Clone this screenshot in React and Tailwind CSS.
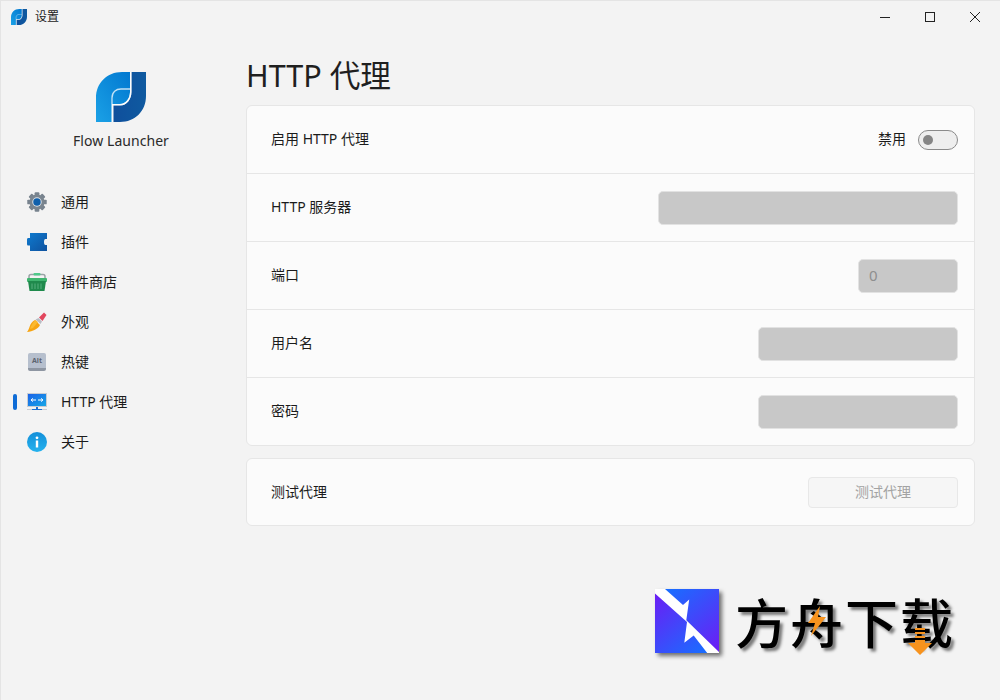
import React from "react";

const font = { fontFamily: '"Noto Sans", "Noto Sans CJK SC", sans-serif' };

function Leaf({ size, id }) {
  return (
    <svg width={size} height={size} viewBox="0 0 50 50">
      <defs>
        <linearGradient id={id + "a"} x1="0" y1="1" x2="1" y2="0">
          <stop offset="0" stopColor="#1ba1e6" />
          <stop offset="1" stopColor="#0178d0" />
        </linearGradient>
        <linearGradient id={id + "b"} x1="0" y1="0" x2="1" y2="0">
          <stop offset="0" stopColor="#0f4f9c" />
          <stop offset="1" stopColor="#0f5aa0" />
        </linearGradient>
      </defs>
      <path d="M0 50V26C0 11 11 0 26 0H34V20C34 26 30 32 24 32H16V50Z" fill={`url(#${id}a)`} />
      <path d="M17.5 50V33.5H24C31 33.5 35.5 27 35.5 20V0H50V24C50 39 39 50 24 50Z" fill={`url(#${id}b)`} />
      <path d="M16 50V26C16 20 20 17 25 17H34" fill="none" stroke="#fff" strokeOpacity=".75" strokeWidth="1.3" />
      <path d="M34.7 0V20C34.7 27 30 32.7 24 32.7H16" fill="none" stroke="#fff" strokeOpacity=".8" strokeWidth="1.3" />
    </svg>
  );
}

const GearIcon = () => (
  <svg width="22" height="22" viewBox="0 0 22 22">
    {[0, 45, 90, 135, 180, 225, 270, 315].map((a) => (
      <rect key={a} x="8.400" y="0.300" width="5.200" height="5" rx="1" fill="#78838e" transform={`rotate(${a} 11 11)`} />
    ))}
    <circle cx="11" cy="11" r="8.300" fill="#7a858f" />
    <circle cx="11" cy="11" r="5.200" fill="#dfe3e8" />
    <circle cx="11" cy="11" r="4.100" fill="#1060ab" />
  </svg>
);

const PuzzleIcon = () => (
  <svg width="20" height="18" viewBox="0 0 20 18">
    <defs>
      <linearGradient id="pz" x1="0" y1="0" x2="1" y2="1">
        <stop offset="0" stopColor="#0e7bd0" />
        <stop offset="1" stopColor="#0f529f" />
      </linearGradient>
    </defs>
    <path d="M3 0H20V6H18.500Q17 6 17 9Q17 12 18.500 12H20V18H3V12.500H1Q0 12.500 0 11V6.500Q0 5 1 5H3Z" fill="url(#pz)" />
  </svg>
);

const BasketIcon = () => (
  <svg width="20" height="18" viewBox="0 0 20 18">
    <path d="M2 6V3.500Q2 1.500 4 1.500H16Q18 1.500 18 3.500V6" fill="none" stroke="#9aa3a6" strokeWidth="1.500" />
    <rect x="6.500" y="0" width="7" height="2.500" rx="1" fill="#4fc98a" />
    <rect x="0" y="5" width="20" height="4" rx="1" fill="#3fb56f" />
    <path d="M1 8H19L17.500 18H2.500Z" fill="#1f8a4c" />
    <path d="M5 10.500V16M8 10.500V16M11 10.500V16M14 10.500V16" stroke="#58b07f" strokeWidth="1" />
  </svg>
);

const BrushIcon = () => (
  <svg width="20" height="20" viewBox="0 0 20 20">
    <path d="M8 8L13 13C11 17 6 19.500 0 20C3 17 2 11 8 8Z" fill="#f7a411" />
    <path d="M8.500 8L11 10L6 16L3 17C4 14 6 10 8.500 8Z" fill="#fbb92e" />
    <path d="M8.500 7.500L13.500 12L15 9.500L11.500 6Z" fill="#b9bcc4" />
    <path d="M12 5.500L15.500 9L19.500 3L17 .5Z" fill="#e2465d" />
  </svg>
);

const AltIcon = () => (
  <div className="w-[18px] h-[18px] rounded-[2px] bg-[#b6bfcd] border-b-[3px] border-[#8e96a2] flex items-center justify-center">
    <span className="text-[7px] leading-none font-bold text-[#5d6470]" style={font}>Alt</span>
  </div>
);

const MonitorIcon = () => (
  <svg width="20" height="18" viewBox="0 0 20 18">
    <defs>
      <linearGradient id="mn" x1="0" y1="0" x2="1" y2="1">
        <stop offset="0" stopColor="#1b62e8" />
        <stop offset="1" stopColor="#16a6e6" />
      </linearGradient>
    </defs>
    <rect x="0" y="0" width="20" height="14" fill="#c7ccd3" />
    <rect x="1" y="1" width="18" height="12" fill="url(#mn)" />
    <path d="M4 7H9M11 7H16" stroke="#fff" strokeWidth="1" />
    <path d="M6 5.300L4 7L6 8.700M14 5.300L16 7L14 8.700" fill="none" stroke="#fff" strokeWidth=".9" />
    <rect x="9" y="14" width="2" height="2" fill="#1d6fd2" />
    <rect x="0" y="16" width="20" height="1" fill="#c7ccd3" />
    <rect x="5" y="16" width="10" height="1" fill="#1d6fd2" />
  </svg>
);

const InfoIcon = () => (
  <svg width="20" height="20" viewBox="0 0 20 20">
    <defs>
      <linearGradient id="inf" x1="0" y1="0" x2="0" y2="1">
        <stop offset="0" stopColor="#138fd9" />
        <stop offset="1" stopColor="#25b2ee" />
      </linearGradient>
    </defs>
    <circle cx="10" cy="10" r="10" fill="url(#inf)" />
    <circle cx="10" cy="5.800" r="1.400" fill="#fff" />
    <rect x="8.800" y="8.500" width="2.400" height="7" fill="#fff" />
  </svg>
);

const navItems = [
  { label: "通用", icon: <GearIcon /> },
  { label: "插件", icon: <PuzzleIcon /> },
  { label: "插件商店", icon: <BasketIcon /> },
  { label: "外观", icon: <BrushIcon /> },
  { label: "热键", icon: <AltIcon /> },
  { label: "HTTP 代理", icon: <MonitorIcon />, active: true },
  { label: "关于", icon: <InfoIcon /> },
];

function Field({ width, value }) {
  return (
    <div className={`${width} h-[34px] rounded-[5px] bg-[#c8c8c8] border border-[#e2e2e2] flex items-center px-[10px] text-[15px] text-[#8f8f8f]`}>
      {value}
    </div>
  );
}

function Row({ label, children, height }) {
  return (
    <div className={`${height} flex items-center justify-between pl-6 pr-4`}>
      <span className="text-[14px] pb-[2px] text-[#1b1b1b]">{label}</span>
      {children}
    </div>
  );
}

const divided = "h-[68px] border-b border-[#e6e6e6]";

export default function App() {
  return (
    <div className="relative w-[1000px] h-[700px] overflow-hidden bg-[#f3f3f3] border-l border-t border-[#e4e4e4] flex flex-col" style={font}>
      {/* Title bar */}
      <div className="h-[32px] flex items-center pl-[10px] shrink-0">
        <Leaf size={16} id="t" />
        <span className="ml-[8px] text-[12px] text-[#222]">设置</span>
        <div className="ml-auto flex items-center pr-[3px]">
          <div className="w-[45px] h-[32px] flex items-center justify-center">
            <div className="w-[10px] h-px bg-[#222]" />
          </div>
          <div className="w-[45px] h-[32px] flex items-center justify-center">
            <div className="w-[10px] h-[10px] border border-[#222]" />
          </div>
          <div className="w-[45px] h-[32px] flex items-center justify-center">
            <svg width="10" height="10" viewBox="0 0 10 10">
              <path d="M0 0L10 10M10 0L0 10" stroke="#222" strokeWidth="1" />
            </svg>
          </div>
        </div>
      </div>

      <div className="flex flex-1 min-h-0">
        {/* Sidebar */}
        <div className="w-[245px] shrink-0 flex flex-col">
          <div className="flex flex-col items-center pt-[39px] pr-[5px]">
            <Leaf size={50} id="m" />
            <span className="mt-[9px] text-[14px] leading-[20px] tracking-[0.05px] text-[#2a2a2a]">Flow Launcher</span>
          </div>
          <div className="mt-[31px] flex flex-col">
            {navItems.map((n) => (
              <div key={n.label} className="relative h-[40px] flex items-center pl-[26px]">
                {n.active && <div className="absolute left-[12px] top-[12px] w-[4px] h-[16px] rounded-full bg-[#0f6cd6]" />}
                <div className="w-[20px] h-[22px] flex items-center justify-center">{n.icon}</div>
                <span className="ml-[14px] pb-[2px] text-[14px] text-[#1b1b1b]">{n.label}</span>
              </div>
            ))}
          </div>
        </div>

        {/* Content */}
        <div className="flex-1 pr-[25px] min-w-0">
          <h1 className="text-[30.600px] leading-[42px] mt-[21px] mb-[9px] text-[#1f1f1f] font-normal">HTTP 代理</h1>
          <div className="rounded-[6px] border border-[#e6e6e6] bg-[#fbfbfb]">
            <Row label="启用 HTTP 代理" height={divided}>
              <div className="flex items-center">
                <span className="text-[14px] pb-[2px] text-[#1b1b1b] mr-[12px]">禁用</span>
                <div className="w-[40px] h-[20px] rounded-full border border-[#8a8a8a] bg-[#eeeeee] flex items-center pl-[4px]">
                  <div className="w-[10px] h-[10px] rounded-full bg-[#858585]" />
                </div>
              </div>
            </Row>
            <Row label="HTTP 服务器" height={divided}><Field width="w-[300px]" /></Row>
            <Row label="端口" height={divided}><Field width="w-[100px]" value="0" /></Row>
            <Row label="用户名" height={divided}><Field width="w-[200px]" /></Row>
            <Row label="密码" height="h-[67px]"><Field width="w-[200px]" /></Row>
          </div>
          <div className="mt-[12px] rounded-[6px] border border-[#e6e6e6] bg-[#fbfbfb]">
            <Row label="测试代理" height="h-[66px]">
              <div className="w-[150px] h-[31px] rounded-[4px] border border-[#e8e8e8] bg-[#f6f6f6] flex items-center justify-center pb-[2px] text-[14px] text-[#a3a3a3]">
                测试代理
              </div>
            </Row>
          </div>
        </div>
      </div>

      {/* Watermark */}
      <div className="absolute left-[654px] top-[588px] flex items-center">
        <svg width="64" height="64" viewBox="0 0 64 64" className="drop-shadow-[3px_3px_2px_rgba(0,0,0,0.55)]">
          <defs>
            <linearGradient id="wma" x1="0" y1="0.1" x2="0.75" y2="1">
              <stop offset="0" stopColor="#6a1ff5" />
              <stop offset="1" stopColor="#1a6cff" />
            </linearGradient>
            <linearGradient id="wmb" x1="0.25" y1="0" x2="1" y2="0.9">
              <stop offset="0" stopColor="#1a6cff" />
              <stop offset="1" stopColor="#6a1ff5" />
            </linearGradient>
          </defs>
          <path d="M0 0H64V64Z" fill="url(#wmb)" />
          <path d="M0 0V64H64Z" fill="url(#wma)" />
          <path d="M0 0H10L28 16L34.200 10.400L31.300 31.200L64 63V64H52.200L38.700 46.600L29.300 53.700L32 33L0 4.400Z" fill="#fff" />
        </svg>
        <div className="relative ml-[16px] text-[53px] leading-[64px] font-medium tracking-[2px] text-black whitespace-nowrap [text-shadow:3px_3px_3px_rgba(0,0,0,0.5)]" style={{ fontFamily: '"Noto Sans CJK SC", sans-serif' }}>
          方舟下载
          <svg width="20" height="30" viewBox="0 0 20 30" className="absolute left-[72px] top-[17px]">
            <path d="M13 0L1 17H8L4 30L19 11H11Z" fill="#f7931e" />
          </svg>
          <svg width="24" height="27" viewBox="0 0 24 27" className="absolute left-[173px] top-[39px]">
            <path d="M7 0H17V2H7ZM7 4H17V6H7ZM7 8H17V10H7ZM7 12H17V15H24L12 27L0 15H7Z" fill="#f7931e" />
          </svg>
        </div>
      </div>
    </div>
  );
}
